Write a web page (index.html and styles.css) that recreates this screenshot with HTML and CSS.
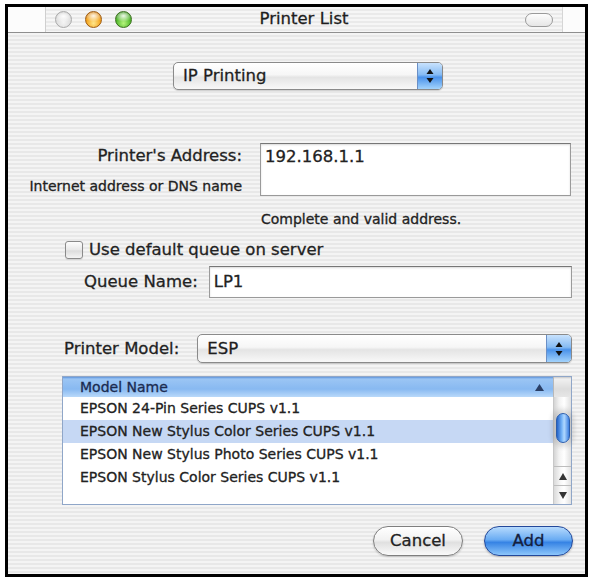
FILE: index.html
```html
<!DOCTYPE html>
<html>
<head>
<meta charset="utf-8">
<link rel="stylesheet" href="styles.css">
</head>
<body>
<div class="frame">
  <div class="topstrip">
    <div class="titlebar">
      <div class="lights">
        <span class="light light-gray"></span>
        <span class="light light-orange"></span>
        <span class="light light-green"></span>
      </div>
      <div class="title">Printer List</div>
      <div class="pill-wrap"><span class="pill"></span></div>
    </div>
  </div>
  <div class="content">
    <div class="r-ip">
      <div class="popup popup-ip">
        <span class="popup-text">IP Printing</span>
        <span class="popup-arrows">
          <svg width="8" height="16" viewBox="0 0 8 16"><polygon points="4,1 7.5,6 0.5,6" fill="#111"/><polygon points="0.5,10 7.5,10 4,15" fill="#111"/></svg>
        </span>
      </div>
    </div>
    <div class="r-addr">
      <div class="addr-labels">
        <div class="lbl">Printer's Address:</div>
        <div class="hint">Internet address or DNS name</div>
      </div>
      <div class="field field-addr">192.168.1.1</div>
    </div>
    <div class="r-valid">Complete and valid address.</div>
    <div class="r-check">
      <span class="checkbox"></span>
      <span>Use default queue on server</span>
    </div>
    <div class="r-queue">
      <span class="lbl">Queue Name:</span>
      <div class="field field-queue">LP1</div>
    </div>
    <div class="r-model">
      <span class="lbl">Printer Model:</span>
      <div class="popup popup-model">
        <span class="popup-text">ESP</span>
        <span class="popup-arrows">
          <svg width="8" height="16" viewBox="0 0 8 16"><polygon points="4,1 7.5,6 0.5,6" fill="#111"/><polygon points="0.5,10 7.5,10 4,15" fill="#111"/></svg>
        </span>
      </div>
    </div>
    <div class="r-table">
      <div class="th">
        <span>Model Name</span>
        <svg width="9" height="7" viewBox="0 0 9 7"><polygon points="4.5,0 9,7 0,7" fill="#2a3f66"/></svg>
      </div>
      <div class="th-corner"></div>
      <div class="rows">
        <div class="row">EPSON 24-Pin Series CUPS v1.1</div>
        <div class="row row-sel">EPSON New Stylus Color Series CUPS v1.1</div>
        <div class="row">EPSON New Stylus Photo Series CUPS v1.1</div>
        <div class="row">EPSON Stylus Color Series CUPS v1.1</div>
      </div>
      <div class="scrollbar">
        <div class="track"><div class="thumb"></div></div>
        <div class="sarrow sarrow-up"><svg width="8" height="7" viewBox="0 0 8 7"><polygon points="4,0 8,7 0,7" fill="#333"/></svg></div>
        <div class="sarrow sarrow-down"><svg width="8" height="7" viewBox="0 0 8 7"><polygon points="0,0 8,0 4,7" fill="#333"/></svg></div>
      </div>
    </div>
    <div class="r-buttons">
      <div class="btn btn-cancel">Cancel</div>
      <div class="btn btn-add">Add</div>
    </div>
  </div>
</div>
</body>
</html>
```

FILE: styles.css
```css
* { box-sizing: border-box; }
html, body { margin: 0; padding: 0; background: #fff; }
body {
  width: 593px;
  height: 579px;
  overflow: hidden;
  font-family: "DejaVu Sans", "Liberation Sans", sans-serif;
  font-size: 16.5px;
  color: #222;
  -webkit-text-stroke: 0.3px currentColor;
}
.frame {
  margin: 4px 0 0 5px;
  width: 583px;
  height: 573px;
  border: 3px solid #000;
  background: #fcfcfc;
  display: flex;
  flex-direction: column;
}
.topstrip {
  height: 26px;
  flex: none;
  border-bottom: 1px solid #8f8f8f;
  padding-left: 37px;
  display: flex;
}
.titlebar {
  width: 518px;
  height: 25px;
  background: repeating-linear-gradient(to bottom, #f6f6f6 0 2px, #eaeaea 2px 4px);
  border-left: 1px solid #cfcfcf;
  border-right: 1px solid #d6d6d6;
  display: grid;
  grid-template-columns: 1fr auto 1fr;
  align-items: center;
}
.lights {
  display: flex;
  gap: 13px;
  padding-left: 9px;
}
.light {
  width: 17px;
  height: 17px;
  border-radius: 50%;
  display: block;
}
.light-gray {
  border: 1px solid #a9a9a9;
  background: radial-gradient(ellipse 60% 40% at 50% 28%, rgba(255,255,255,.95), rgba(255,255,255,0)),
              radial-gradient(circle at 50% 70%, #f4f4f4, #dcdcdc 60%, #bcbcbc);
}
.light-orange {
  border: 1px solid #9c5a12;
  background: radial-gradient(ellipse 60% 40% at 50% 26%, rgba(255,255,255,.9), rgba(255,255,255,0)),
              radial-gradient(circle at 50% 75%, #ffe68a, #f3a21b 55%, #c06a0a);
}
.light-green {
  border: 1px solid #3a6e1e;
  background: radial-gradient(ellipse 60% 40% at 50% 26%, rgba(255,255,255,.9), rgba(255,255,255,0)),
              radial-gradient(circle at 50% 75%, #b6f57c, #4fb72a 55%, #2c7a14);
}
.title {
  font-size: 16.5px;
  color: #1e1e1e;
  line-height: 20px;
  padding-bottom: 1px;
}
.pill-wrap {
  display: flex;
  justify-content: flex-end;
  padding-right: 9px;
}
.pill {
  display: block;
  width: 28px;
  height: 14px;
  border-radius: 7px;
  border: 1.5px solid #9a9a9a;
  background: linear-gradient(#fdfdfd, #e6e6e6);
}
.content {
  flex: 1;
  background: repeating-linear-gradient(to bottom, #f4f4f4 0 2px, #e8e8e8 2px 4px);
  display: flex;
  flex-direction: column;
}
.r-ip {
  margin: 29px 0 0 165px;
}
.popup {
  height: 28px;
  border: 1px solid #8a8a8a;
  border-radius: 5px;
  background: linear-gradient(#ffffff, #f6f6f6 45%, #e4e4e4 55%, #f8f8f8);
  display: flex;
  align-items: stretch;
  box-shadow: 0 1px 1px rgba(0,0,0,.15);
}
.popup-ip { width: 270px; }
.popup-text {
  flex: 1;
  padding-left: 9px;
  line-height: 26px;
  color: #1e1e1e;
}
.popup-arrows {
  width: 25px;
  border-left: 1px solid #6a8fc6;
  border-radius: 0 4px 4px 0;
  background: linear-gradient(#c8e2fd, #86bbf3 45%, #4a92ea 55%, #a3d3fc);
  display: flex;
  align-items: center;
  justify-content: center;
}
.r-addr {
  margin: 53px 14px 0 0;
  display: flex;
  gap: 16px;
}
.addr-labels {
  width: 236px;
  text-align: right;
  padding-right: 2px;
}
.lbl { line-height: 20px; }
.addr-labels .lbl { padding-top: 3px; }
.hint {
  font-size: 14px;
  line-height: 16px;
  margin-top: 12px;
}
.field {
  flex: 1;
  background: #fff;
  border: 1px solid #9a9a9a;
  border-top-color: #767676;
  box-shadow: inset 0 1px 2px rgba(0,0,0,.15);
  padding-left: 4px;
}
.field-addr {
  height: 53px;
  padding-top: 3px;
  line-height: 20px;
}
.r-valid {
  margin: 14px 0 0 253px;
  font-size: 14px;
  line-height: 18px;
}
.r-check {
  margin: 13px 0 0 57px;
  height: 18px;
  display: flex;
  align-items: center;
  gap: 6px;
  line-height: 18px;
}
.checkbox {
  width: 18px;
  height: 18px;
  border: 1px solid #8a8a8a;
  border-radius: 3px;
  background: linear-gradient(#fdfdfd, #e8e8e8 50%, #dcdcdc 55%, #f4f4f4);
  box-shadow: 0 1px 1px rgba(0,0,0,.1);
}
.r-queue {
  margin: 7px 13px 0 76px;
  display: flex;
  align-items: center;
  gap: 11px;
}
.field-queue {
  height: 32px;
  line-height: 30px;
  padding-left: 4px;
}
.r-model {
  margin: 36px 13px 0 56px;
  display: flex;
  align-items: center;
  gap: 18px;
}
.popup-model { flex: 1; height: 29px; }
.popup-model .popup-text { line-height: 27px; }
.r-table {
  margin: 13px 13px 0 54px;
  height: 129px;
  border: 1px solid #8fa6c8;
  background: #fff;
  display: grid;
  grid-template-columns: 1fr 18px;
  grid-template-rows: 20px 1fr;
}
.th {
  background: linear-gradient(#5f95dc 0, #9bc5f4 2px, #88b9f1 60%, #b9d9fa 100%);
  display: flex;
  align-items: center;
  justify-content: space-between;
  padding: 0 9px 0 17px;
  font-size: 14px;
  color: #1b2b50;
  line-height: 19px;
}
.th-corner {
  background: linear-gradient(#c8c8c8 0, #f0f0f0 2px, #dcdcdc 60%, #e6e6e6);
  border-left: 1px solid #b8b8b8;
}
.rows {
  font-size: 14px;
  color: #222;
}
.row {
  height: 23px;
  line-height: 23px;
  padding-left: 17px;
}
.row-sel { background: #c6d8f4; }
.scrollbar {
  display: flex;
  flex-direction: column;
  border-left: 1px solid #c8c8c8;
}
.track {
  flex: 1;
  background: linear-gradient(to right, #d4d4d4, #f2f2f2 30%, #ffffff 60%, #e0e0e0);
  padding-top: 16px;
}
.thumb {
  width: 14px;
  height: 30px;
  margin: 0 auto;
  border-radius: 7px;
  border: 1px solid #2c5daa;
  background: linear-gradient(to right, #2463c8, #76b4f7 40%, #b0d8ff 60%, #3d7fe0);
  box-shadow: 0 0 5px 4px rgba(0,0,0,.13);
}
.sarrow {
  height: 19px;
  display: flex;
  align-items: center;
  justify-content: center;
  background: linear-gradient(to right, #dadada, #f8f8f8 40%, #ffffff 60%, #e2e2e2);
  border-top: 1px solid #bdbdbd;
}
.r-buttons {
  margin: 21px 12px 0 0;
  display: flex;
  justify-content: flex-end;
  gap: 21px;
}
.btn {
  height: 30px;
  border-radius: 15px;
  text-align: center;
  line-height: 28px;
}
.btn-cancel {
  width: 90px;
  border: 1px solid #7f7f7f;
  background: linear-gradient(#ffffff, #f2f2f2 45%, #e0e0e0 55%, #fafafa);
  box-shadow: 0 1px 2px rgba(0,0,0,.2);
  color: #222;
}
.btn-add {
  width: 89px;
  border: 1px solid #23489a;
  background: linear-gradient(#b6dafd, #6aacf3 45%, #3683e4 55%, #8cc6fb);
  box-shadow: 0 1px 2px rgba(0,0,0,.25);
  color: #15203e;
}
```
